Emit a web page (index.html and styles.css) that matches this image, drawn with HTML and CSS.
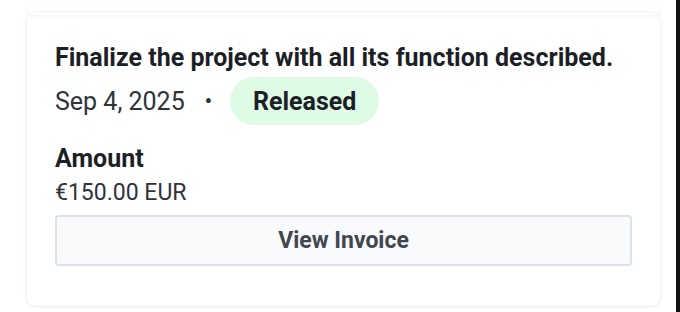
FILE: index.html
```html
<!DOCTYPE html>
<html>
<head>
<meta charset="utf-8">
<link rel="stylesheet" href="styles.css">
</head>
<body>
<div class="page">
  <div class="card-prev"></div>
  <div class="card">
    <div class="title">Finalize the project with all its function described.</div>
    <div class="meta">
      <span class="date">Sep 4, 2025</span>
      <span class="dot">•</span>
      <span class="badge">Released</span>
    </div>
    <div class="label">Amount</div>
    <div class="amount">€150.00 EUR</div>
    <button class="btn">View Invoice</button>
  </div>
</div>
<div class="scrollbar"></div>
</body>
</html>
```
FILE: styles.css
```css
html, body {
  margin: 0;
  padding: 0;
  background: #ffffff;
  width: 680px;
  height: 312px;
  overflow: hidden;
  font-family: Roboto, "Liberation Sans", sans-serif;
}
.page {
  padding: 0 20px 0 27px;
  position: relative;
}
.card-prev {
  position: absolute;
  left: 27px;
  right: 20px;
  top: -10px;
  height: 12px;
  border-radius: 8px;
  box-shadow: 0 1px 4px rgba(0,0,0,0.06);
}
.card {
  margin-top: 13px;
  width: 633px;
  height: 293px;
  box-sizing: border-box;
  border-radius: 8px;
  background: #fff;
  box-shadow: 0 0 4px rgba(0,0,0,0.08), 0 1px 2px rgba(0,0,0,0.05);
  padding: 31px 28px 0 28px;
}
.title {
  font-size: 25px;
  font-weight: 700;
  color: #1c1f26;
  line-height: 28px;
  white-space: nowrap;
}
.meta {
  display: flex;
  align-items: center;
  margin-top: 5px;
  height: 48px;
}
.date {
  font-size: 25px;
  color: #2f333b;
}
.dot {
  margin-left: 20px;
  margin-right: 18px;
  font-size: 20px;
  font-weight: 700;
  color: #2f333b;
}
.badge {
  height: 48px;
  padding: 0 23px;
  border-radius: 24px;
  background: #dffbe6;
  font-size: 25px;
  font-weight: 700;
  color: #1c1f26;
  display: flex;
  align-items: center;
}
.label {
  margin-top: 20px;
  font-size: 25px;
  font-weight: 700;
  color: #1c1f26;
  line-height: 28px;
}
.amount {
  margin-top: 7px;
  font-size: 23px;
  color: #2f333b;
  line-height: 26px;
}
.btn {
  display: block;
  margin-top: 9px;
  width: 577px;
  height: 51px;
  border: 2px solid #dde0e7;
  border-radius: 4px;
  background: #f9fafc;
  font-family: Roboto, "Liberation Sans", sans-serif;
  font-size: 23px;
  font-weight: 700;
  color: #42464f;
}
.scrollbar {
  position: absolute;
  right: 0;
  top: 0;
  width: 4px;
  height: 312px;
  background: #111;
}
```
